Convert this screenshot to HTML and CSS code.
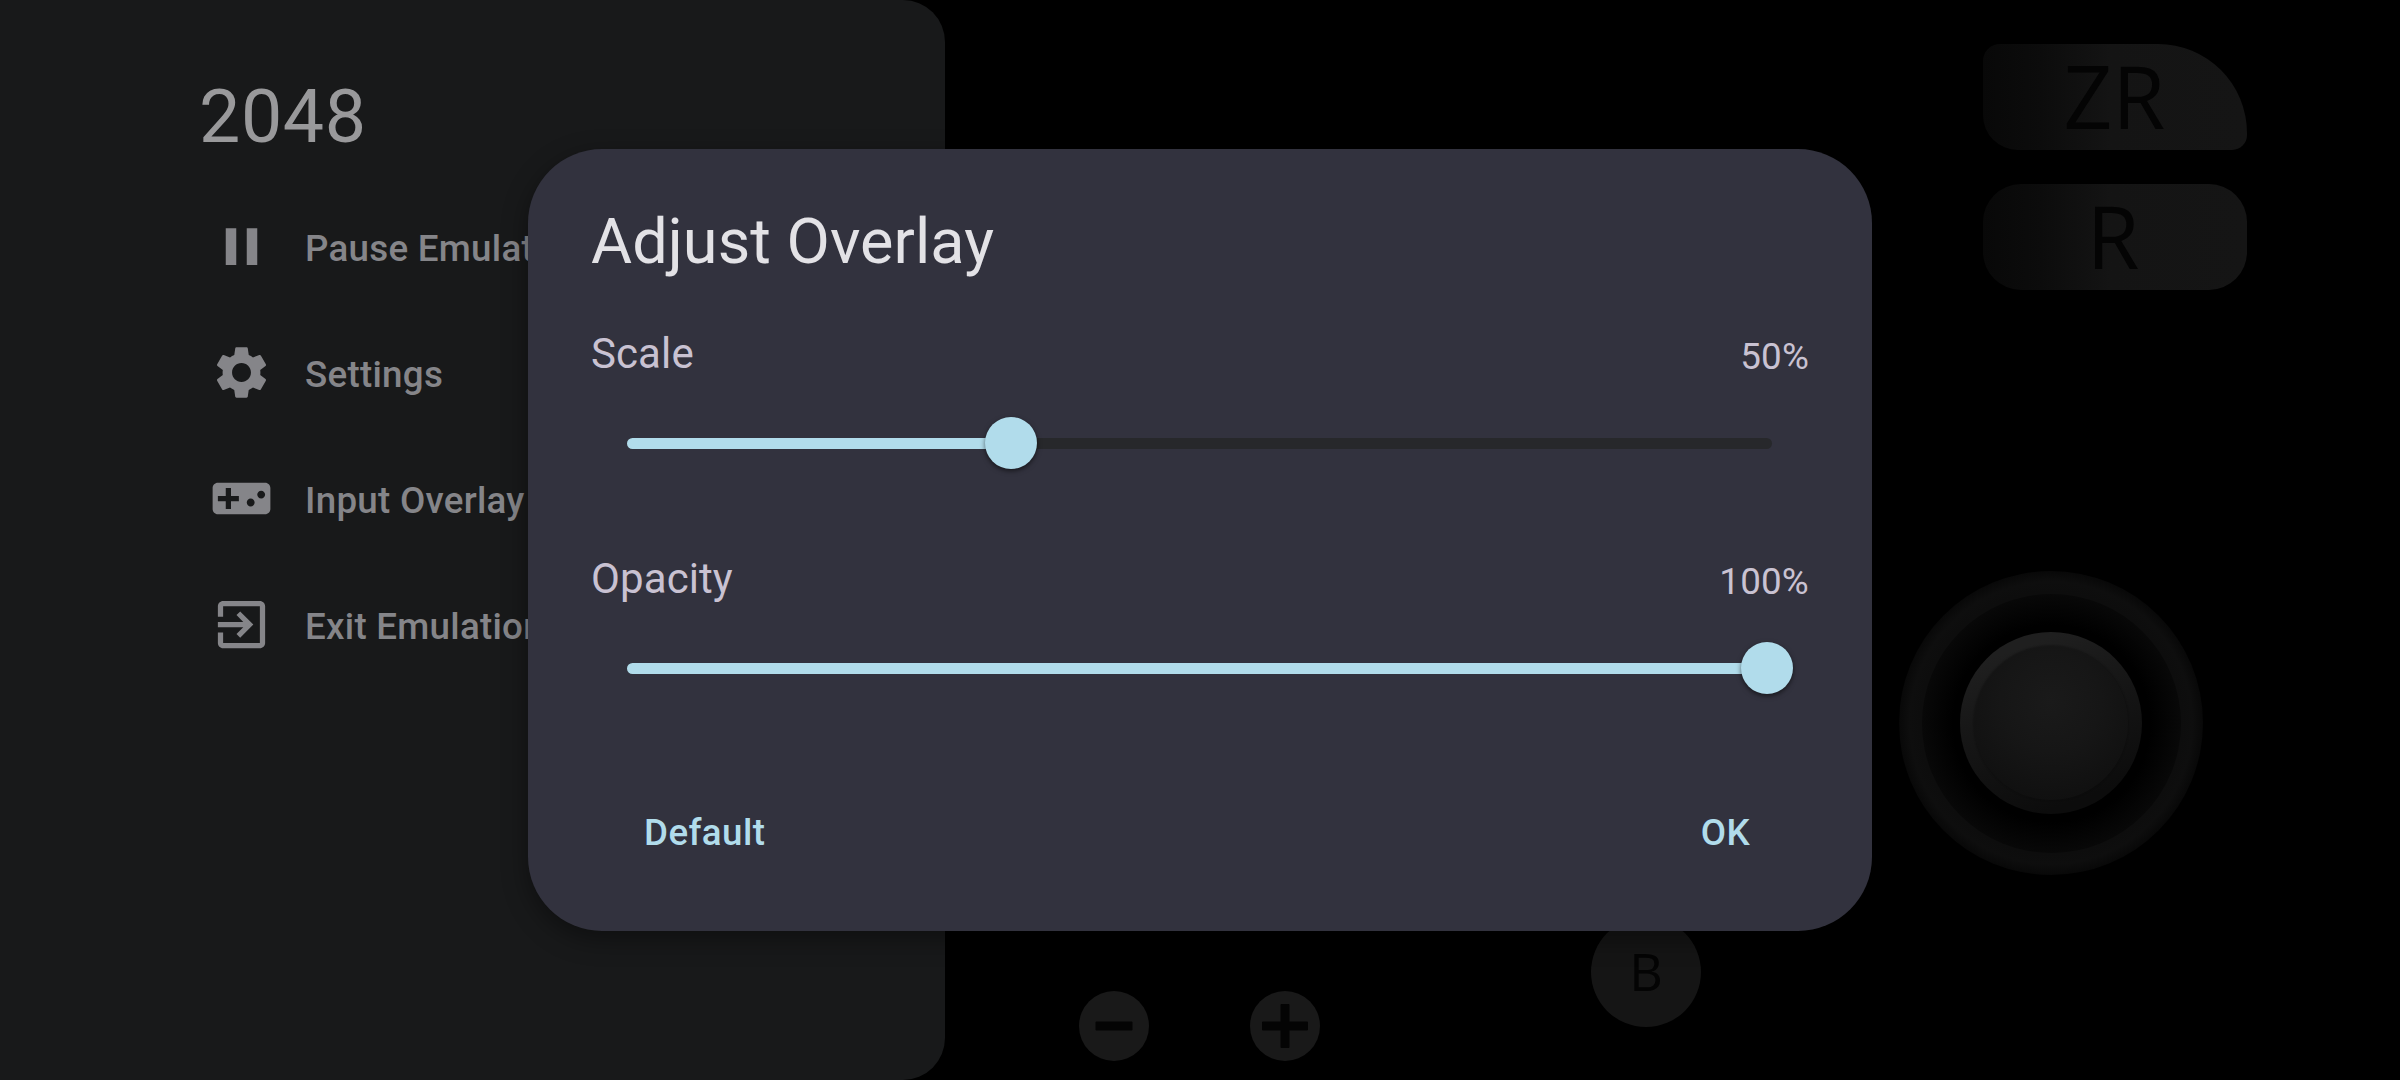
FILE: index.html
```html
<!DOCTYPE html>
<html lang="en">
<head>
<meta charset="utf-8">
<title>2048</title>
<link rel="stylesheet" href="styles.css">
</head>
<body>
<main class="screen">
  <div class="pad">
    <div class="key trigger zr"><span>ZR</span></div>
    <div class="key trigger r"><span>R</span></div>
    <div class="stick"><div class="stick-well"><div class="stick-rim"><div class="stick-cap"></div></div></div></div>
    <div class="key round-b">B</div>
    <div class="key small minus"><svg viewBox="0 0 70 70"><rect x="16.5" y="30.5" width="37" height="9" rx="1"/></svg></div>
    <div class="key small plus"><svg viewBox="0 0 70 70"><path d="M30.500 14q0-1 1-1h7q1 0 1 1v16.500h17.500q1 0 1 1v7q0 1-1 1h-17.500v16.500q0 1-1 1h-7q-1 0-1-1v-16.500h-17.500q-1 0-1-1v-7q0-1 1-1h17.500z"/></svg></div>
  </div>

  <nav class="drawer">
    <h1 class="game">2048</h1>
    <ul class="menu">
      <li class="item"><svg class="icon" viewBox="0 0 24 24"><path d="M6 19h4V5H6v14zm8-14v14h4V5h-4z"/></svg><span>Pause Emulation</span></li>
      <li class="item"><svg class="icon" viewBox="0 0 24 24"><path d="M19.14 12.94c.04-.3.06-.61.06-.94 0-.32-.02-.64-.07-.94l2.03-1.58c.18-.14.23-.41.12-.61l-1.92-3.32c-.12-.22-.37-.29-.59-.22l-2.39.96c-.5-.38-1.03-.7-1.62-.94l-.36-2.54c-.04-.24-.24-.41-.48-.41h-3.84c-.24 0-.43.17-.47.41l-.36 2.54c-.59.24-1.13.57-1.62.94l-2.39-.96c-.22-.08-.47 0-.59.22L2.74 8.870c-.12.21-.08.47.12.61l2.030 1.580c-.05.3-.09.63-.09.94s.02.64.07.94l-2.030 1.580c-.18.14-.23.41-.12.61l1.920 3.320c.12.22.37.29.59.22l2.390-.96c.5.38 1.030.7 1.620.94l.36 2.540c.05.24.24.41.48.41h3.840c.24 0 .44-.17.47-.41l.36-2.540c.59-.24 1.130-.56 1.620-.94l2.390.96c.22.08.47 0 .59-.22l1.920-3.320c.12-.22.07-.47-.12-.61l-2.010-1.580zM12 15.600c-1.980 0-3.600-1.620-3.600-3.600s1.620-3.600 3.600-3.600 3.600 1.620 3.600 3.600-1.620 3.600-3.600 3.600z"/></svg><span>Settings</span></li>
      <li class="item"><svg class="icon" viewBox="0 0 24 24"><path d="M21 6H3c-1.100 0-2 .9-2 2v8c0 1.100.9 2 2 2h18c1.100 0 2-.9 2-2V8c0-1.100-.9-2-2-2zm-10 7H8v3H6v-3H3v-2h3V8h2v3h3v2zm4.500 2c-.83 0-1.500-.67-1.500-1.500s.67-1.500 1.500-1.500 1.500.67 1.500 1.500-.67 1.500-1.500 1.500zm4-3c-.83 0-1.500-.67-1.500-1.500S18.670 9 19.500 9s1.500.67 1.500 1.500-.67 1.500-1.500 1.500z"/></svg><span>Input Overlay</span></li>
      <li class="item"><svg class="icon" viewBox="0 0 24 24"><path d="M10.090 15.590L11.500 17l5-5-5-5-1.410 1.410L12.670 11H3v2h9.670l-2.580 2.590zM19 3H5c-1.110 0-2 .9-2 2v4h2V5h14v14H5v-4H3v4c0 1.100.89 2 2 2h14c1.100 0 2-.9 2-2V5c0-1.100-.9-2-2-2z"/></svg><span>Exit Emulation</span></li>
    </ul>
  </nav>

  <section class="dialog" role="dialog" aria-labelledby="dialog-title">
    <h2 class="title" id="dialog-title">Adjust Overlay</h2>
    <div class="setting">
      <div class="labels"><span class="name">Scale</span><span class="value">50%</span></div>
      <div class="slider"><div class="active" style="width: 33.33%"><i class="thumb"></i></div></div>
    </div>
    <div class="setting">
      <div class="labels"><span class="name">Opacity</span><span class="value">100%</span></div>
      <div class="slider"><div class="active" style="width: 100%"><i class="thumb"></i></div></div>
    </div>
    <div class="actions"><button class="action">Default</button><button class="action">OK</button></div>
  </section>
</main>
</body>
</html>
```

FILE: styles.css
```css
* { box-sizing: border-box; }

body {
  margin: 0;
  background: #000;
  font-family: Roboto, sans-serif;
}

.screen {
  position: relative;
  display: grid;
  place-items: center;
  width: 2400px;
  height: 1080px;
  overflow: hidden;
}

/* Side drawer */
.drawer {
  grid-area: 1 / 1;
  place-self: stretch start;
  width: 945px;
  padding: 74px 0 0 199px;
  border-radius: 0 42px 42px 0;
  background: #18191a;
}

.game {
  margin: 0;
  color: #99999b;
  font-size: 73.5px;
  font-weight: 400;
  letter-spacing: 0.6px;
  line-height: 86px;
}

.menu {
  margin: 23px 0 0;
  padding: 0;
  list-style: none;
}

.item {
  display: flex;
  align-items: center;
  gap: 32px;
  height: 126px;
  padding-left: 11px;
  color: #858589;
  font-size: 36.75px;
  font-weight: 500;
  letter-spacing: 0.26px;
  line-height: 43px;
  white-space: nowrap;
}

.item span { padding-top: 4px; }

.icon {
  width: 63px;
  height: 63px;
  fill: #858589;
}

/* Dialog */
.dialog {
  grid-area: 1 / 1;
  z-index: 2;
  display: flex;
  flex-direction: column;
  width: 1344px;
  height: 782px;
  padding: 56px 63px 0;
  border-radius: 74px;
  background: #32323e;
  box-shadow: 0 8px 26px rgba(0, 0, 0, 0.4);
}

.title {
  margin: 0 0 29px;
  color: #e3e2e6;
  font-size: 63px;
  font-weight: 400;
  letter-spacing: 0.05px;
  line-height: 74px;
}

.setting {
  height: 225px;
  padding-top: 20px;
}

.labels {
  display: flex;
  justify-content: space-between;
  align-items: center;
  height: 50px;
  color: #c9c2d2;
}

.name {
  font-size: 42px;
  letter-spacing: 0.1px;
}

.value {
  padding-top: 6px;
  font-size: 36.75px;
  letter-spacing: 0.2px;
}

.slider {
  height: 11px;
  margin: 60px 37px 0 36px;
  padding: 0 5px 0 6px;
  border-radius: 6px;
  background: #27282b;
}

.active {
  position: relative;
  height: 11px;
  background: #b1dceb;
}

.active::before {
  content: "";
  position: absolute;
  left: -6px;
  width: 12px;
  height: 11px;
  border-radius: 6px;
  background: #b1dceb;
}

.thumb {
  position: absolute;
  top: -21px;
  right: -26px;
  width: 52px;
  height: 52px;
  border-radius: 50%;
  background: #b1dceb;
  box-shadow: 0 2px 5px rgba(0, 0, 0, 0.55);
}

.actions {
  display: flex;
  justify-content: space-between;
  margin-top: 53px;
  padding: 0 59px 0 53px;
}

.action {
  padding: 0;
  border: 0;
  background: none;
  color: #b1dceb;
  font: 500 36.75px/43px Roboto, sans-serif;
  letter-spacing: 0.4px;
}

/* On-screen controls */
.pad {
  position: absolute;
  inset: 0;
}

.key {
  position: absolute;
  display: flex;
  align-items: center;
  justify-content: center;
  background: #151515;
  color: #040404;
  font-family: "Open Sans", sans-serif;
}

.trigger {
  left: 1983px;
  width: 264px;
  height: 106px;
  padding: 0 4px 4px 0;
  background: linear-gradient(90deg, #080808, #0c0c0c 22%, #141414 48%, #151515);
  font-size: 88px;
  line-height: 102px;
}

.trigger span { transform: scaleX(0.97); }

.zr { top: 44px; padding-right: 1px; border-radius: 17px 89px 15px 35px; }
.r { top: 184px; border-radius: 38px; }

.round-b {
  left: 1591px;
  top: 917px;
  width: 110px;
  height: 110px;
  padding-bottom: 3px;
  border-radius: 50%;
  font-size: 52px;
}

.small {
  top: 991px;
  width: 70px;
  height: 70px;
  border-radius: 50%;
  background: #191919;
}

.small svg { width: 70px; height: 70px; fill: #040404; }
.minus { left: 1079px; }
.plus { left: 1250px; }

.stick, .stick-well, .stick-rim, .stick-cap {
  display: grid;
  place-items: center;
  border-radius: 50%;
}

.stick {
  position: absolute;
  left: 1899px;
  top: 571px;
  width: 304px;
  height: 304px;
  background: radial-gradient(circle closest-side, #0d0d0d 86%, #0e0e0e 93%, #080808);
}

.stick-well {
  width: 259px;
  height: 259px;
  background: radial-gradient(circle closest-side, #000 76%, #080808);
}

.stick-rim {
  width: 182px;
  height: 182px;
  background: linear-gradient(160deg, #1f1f1f 15%, #171717 40%, #0c0c0c 85%);
}

.stick-cap {
  width: 154px;
  height: 154px;
  background: radial-gradient(circle at 50% 36%, #1a1a1a, #161616 40%, #0d0d0d 100%);
  box-shadow: 0 0 2px #0b0b0b;
}
```
